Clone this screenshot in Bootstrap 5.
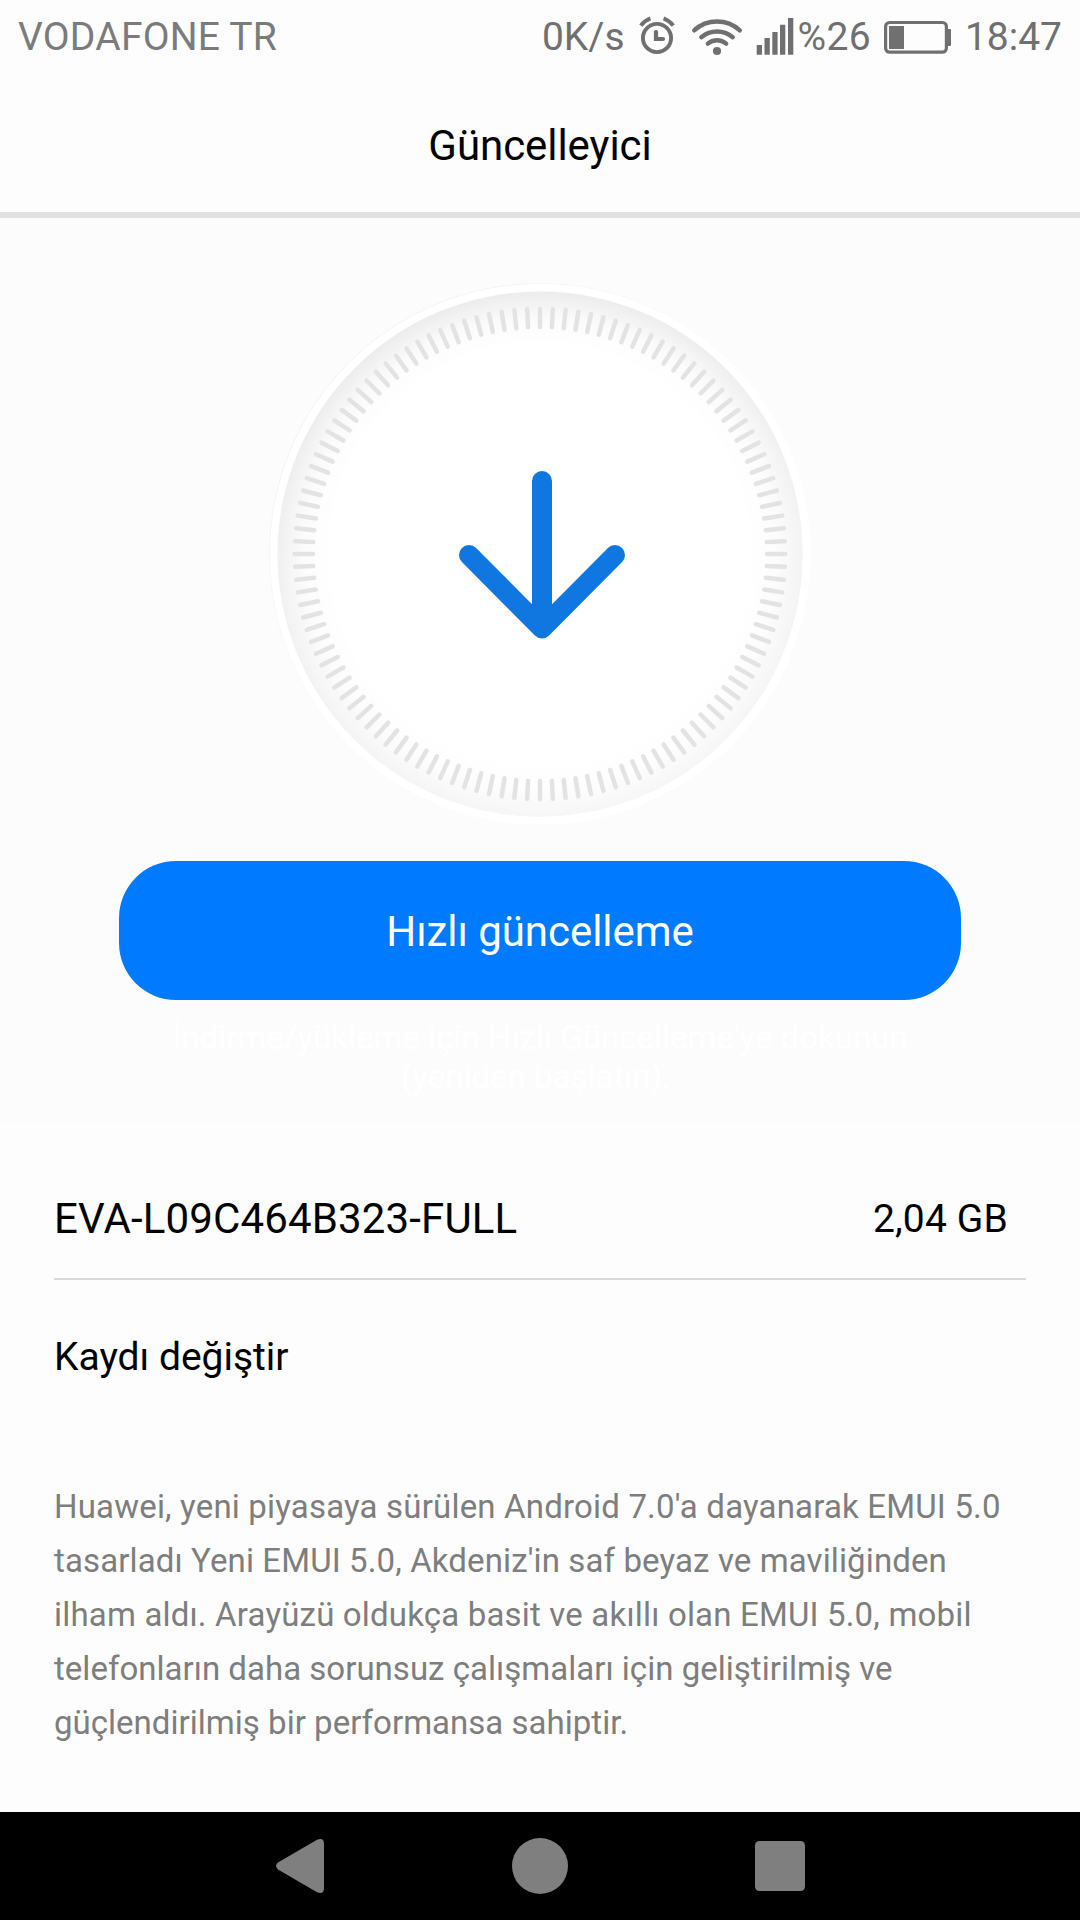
<!DOCTYPE html>
<html lang="tr" data-bs-theme="light">
<head>
<meta charset="utf-8">
<meta name="viewport" content="width=device-width, initial-scale=1">
<title>Güncelleyici</title>
<link href="https://cdn.jsdelivr.net/npm/bootstrap@5.3.0/dist/css/bootstrap.min.css" rel="stylesheet">
<style>
  body { font-family: Roboto, "Noto Sans", sans-serif; background: #fdfdfd; color: #000; }
  .screen { width: 1080px; height: 1920px; }
  svg { display: block; flex: none; }
  .status-bar { height: 73px; padding: 1px 18px 0; font-size: 39px; line-height: 73px; color: #707070; white-space: nowrap; }
  .carrier { color: #7b7b7b; letter-spacing: .22px; }
  .status-icons { margin: 0 4px 0 9px; }
  .percent { letter-spacing: .3px; }
  .battery { margin: 0 13px; }
  .title-bar { height: 145px; padding-top: 6px; border-bottom: 6px solid #e1e1e1; background: #fdfdfd; }
  .title-bar h1 { font-size: 42px; line-height: 50px; font-weight: 400; letter-spacing: -.05px; }
  .hero { height: 905px; background: #fcfcfc; padding-top: 52px; }
  .btn-update { --bs-btn-bg: #007aff; --bs-btn-color: #fff; --bs-btn-border-width: 0; --bs-btn-border-radius: 57px;
    --bs-btn-font-size: 42px; --bs-btn-padding-y: 0; width: 842px; height: 139px; margin-top: 15px; line-height: 50px; padding-top: 2px; letter-spacing: -.05px; }
  .hint { width: 842px; font-size: 33px; line-height: 38.67px; color: #fff; margin-top: 19px; }
  .details { padding: 0 54px; }
  .package { height: 157px; padding: 36px 18px 0 0; border-bottom: 2px solid #d9d9d9; font-size: 42px; letter-spacing: .15px; }
  .package-size { font-size: 39px; padding-top: 1px; }
  .log-title { font-size: 39px; line-height: 50px; font-weight: 400; margin: 52px 0 0; }
  .log-text { font-size: 33px; line-height: 54px; color: #7e7e7e; margin: 98px 0 0; white-space: nowrap; }
  .track-wide { letter-spacing: .18px; }
  .track-mid { letter-spacing: .12px; }
  .track-slight { letter-spacing: .02px; }
  .nav-keys { height: 108px; background: #000; }
</style>
</head>
<body>
<div class="screen d-flex flex-column overflow-hidden">
  <div class="status-bar d-flex justify-content-between">
    <span class="carrier">VODAFONE TR</span>
    <div class="d-flex">
      <span class="rate">0K/s</span>
      <svg class="status-icons" width="160" height="72" viewBox="634 1 160 72" fill="none" stroke="#707070">
        <circle cx="657" cy="38" r="14.1" stroke-width="3.9"/>
        <path d="M656 32v7h7" stroke-width="4.2" stroke-linecap="round" stroke-linejoin="miter"/>
        <path d="M640.8 25.6q3.8-5 9.6-7.2M673.2 25.6q-3.8-5-9.6-7.2" stroke-width="3.9"/>
        <g stroke-width="4.4" stroke-linecap="round">
          <path d="M694.2 30.3a34 34 0 0 1 45.6 0M701.3 37.2a24.5 24.5 0 0 1 31.4 0M707.8 43.6a14.5 14.5 0 0 1 18.4 0"/>
        </g>
        <circle cx="717" cy="51" r="4.1" fill="#707070" stroke="none"/>
        <path d="M756.7 45h5.3v9.7h-5.3zM764.5 38h5.3v16.7h-5.3zM772.3 32h5.3v22.7h-5.3zM780 24.7h5.3v30H780zM788 18h5.3v36.7H788z" fill="#707070" stroke="none"/>
      </svg>
      <span class="percent">%26</span>
      <svg class="battery" width="68" height="72" viewBox="884 1 68 72">
        <rect x="885.6" y="22.5" width="60.8" height="29.7" rx="4" fill="none" stroke="#707070" stroke-width="3.2"/>
        <path d="M889 26h15v23h-15zM948 29h2q1 0 1 1v15q0 1-1 1h-2z" fill="#707070"/>
      </svg>
      <span class="clock">18:47</span>
    </div>
  </div>

  <header class="title-bar d-flex align-items-center justify-content-center">
    <h1 class="m-0">Güncelleyici</h1>
  </header>

  <section class="hero d-flex flex-column align-items-center">
    <svg width="576" height="576" viewBox="252 270 576 576">
      <defs>
        <radialGradient id="rim">
          <stop offset=".8" stop-color="#e4e4e4" stop-opacity="0"/>
          <stop offset=".9" stop-color="#e4e4e4" stop-opacity=".2"/>
          <stop offset="1" stop-color="#e4e4e4" stop-opacity=".9"/>
        </radialGradient>
        <linearGradient id="light" x1=".3" y1="0" x2=".6" y2="1">
          <stop offset="0" stop-color="#fff" stop-opacity=".2"/>
          <stop offset="1" stop-color="#fff" stop-opacity=".68"/>
        </linearGradient>
        <linearGradient id="ring" x1="0" y1="0" x2=".8" y2=".8">
          <stop offset="0" stop-color="#eee"/>
          <stop offset=".7" stop-color="#fefefe"/>
        </linearGradient>
      </defs>
      <circle cx="540" cy="554" r="270.5" fill="#fff" stroke="url(#ring)"/>
      <circle cx="540" cy="554" r="262.4" fill="url(#rim)"/>
      <circle cx="540" cy="554" r="262.4" fill="url(#light)"/>
      <g id="ticks" stroke="#e3e3e3" stroke-width="4.5" stroke-linecap="round"></g>
      <path d="M542 481v147.5M469 555l73 73.5 73-73.5" fill="none" stroke="#1177e0" stroke-width="20" stroke-linecap="round" stroke-linejoin="round"/>
    </svg>
    <button type="button" class="btn btn-update">Hızlı güncelleme</button>
    <p class="hint text-center mb-0">İndirme/yükleme için Hızlı Güncelleme'ye dokunun<br>(yeniden başlatın).&nbsp;</p>
  </section>

  <section class="details flex-grow-1">
    <div class="package d-flex justify-content-between align-items-center pb-0">
      <span>EVA-L09C464B323-FULL</span>
      <span class="package-size">2,04 GB</span>
    </div>
    <h2 class="log-title">Kaydı değiştir</h2>
    <p class="log-text"><span class="track-wide">Huawei, yeni piyasaya sürülen Android 7.0'a dayanarak EMUI 5.0</span><br><span class="track-mid">tasarladı Yeni EMUI 5.0, Akdeniz'in saf beyaz ve maviliğinden</span><br><span class="track-wide">ilham aldı. Arayüzü oldukça basit ve akıllı olan EMUI 5.0, mobil</span><br><span class="track-slight">telefonların daha sorunsuz çalışmaları için geliştirilmiş ve<br>güçlendirilmiş bir performansa sahiptir.</span></p>
  </section>

  <nav class="nav-keys d-flex justify-content-center">
    <svg width="540" height="108" viewBox="270 1812 540 108" fill="#7f7f7f">
      <path d="M278 1862.6 317 1839.8q7-2.6 7 4v44.4q0 6.6-7 4L278 1869.4q-4-3.4 0-6.8z"/>
      <circle cx="540" cy="1866" r="28"/>
      <rect x="755" y="1841" width="50" height="50" rx="4.5"/>
    </svg>
  </nav>
</div>
<script src="https://cdn.jsdelivr.net/npm/bootstrap@5.3.0/dist/js/bootstrap.bundle.min.js"></script>
<script>
  // 120 dial marks, one every three degrees
  const ticks = document.getElementById('ticks');
  for (let i = 0; i < 120; i++) {
    const t = document.createElementNS('http://www.w3.org/2000/svg', 'path');
    t.setAttribute('d', 'M540 308.7V327');
    t.setAttribute('transform', `rotate(${i * 3} 540 554)`);
    ticks.appendChild(t);
  }
</script>
</body>
</html>
